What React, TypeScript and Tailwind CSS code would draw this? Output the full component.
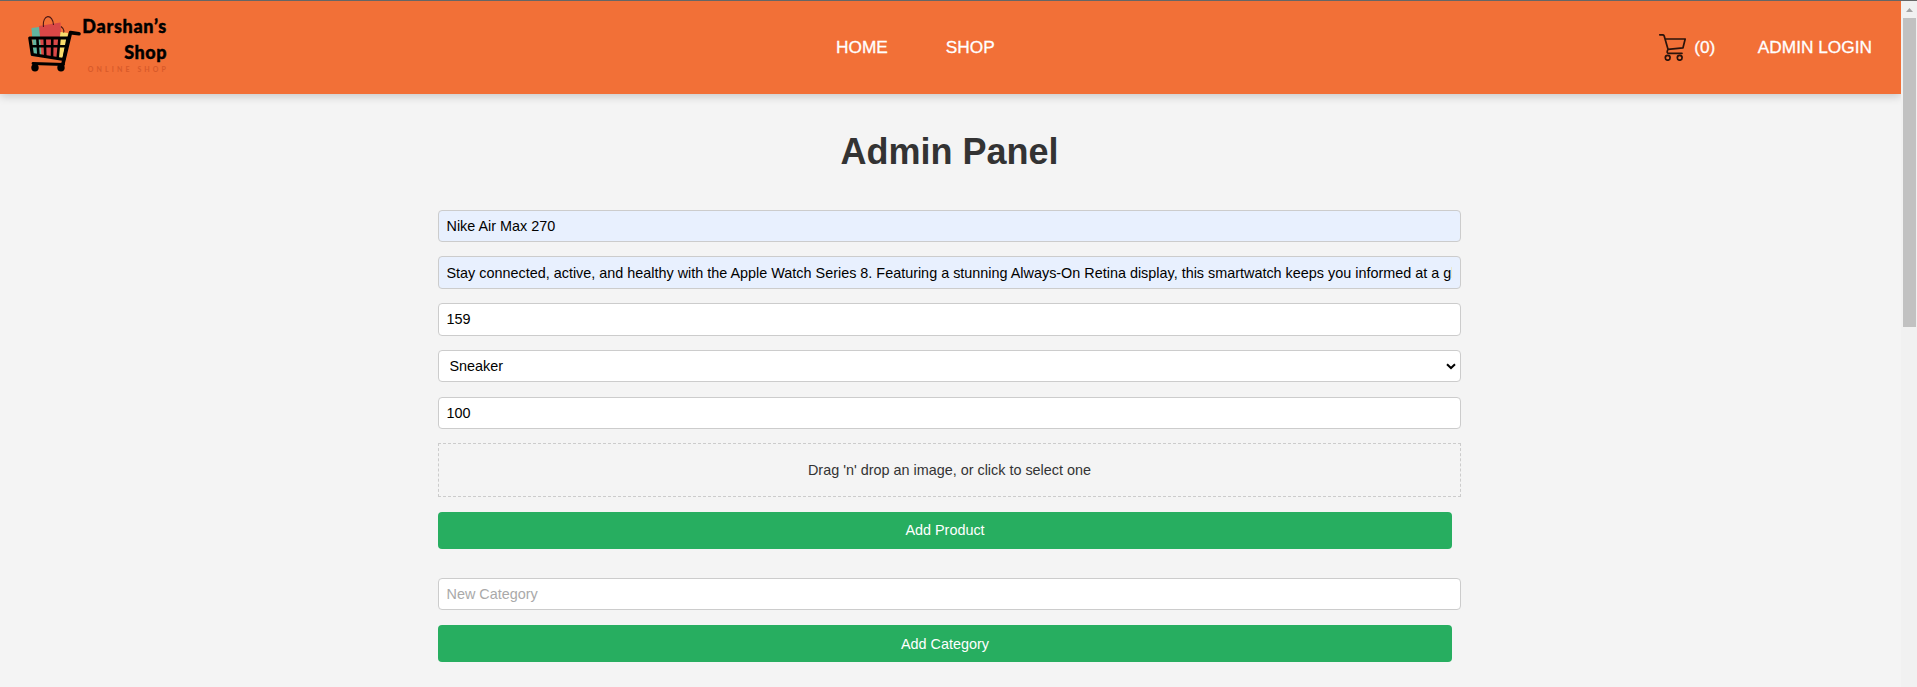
import type { ReactNode } from "react";

const fieldClass =
  "block w-full rounded-[4px] border border-[#ccc] pr-[8.5px] text-[14.4px] text-black placeholder:text-[#a9a9a9] outline-none";

function Logo() {
  return (
    <div className="flex h-[70px] items-start pl-[28px]">
      <svg width="54" height="56" viewBox="0 0 54 56" className="mt-[3px] shrink-0">
        <path d="M3.500 12l8-1 2 30-8-1z" fill="#61b5a0" />
        <path d="M11 10L32.500 6.500l1.500 35-20-1z" fill="#d94747" />
        <path d="M32.500 16l7.500 1-3 25-8 1z" fill="#f8dc6c" />
        <path d="M15.500 11C14-2.500 25-2.500 25.500 9M33 10.500q4 3 2.500 6" fill="none" stroke="#4b1714" strokeWidth="1.100" />
        <path d="M1.800 22H40L35.800 43.500 4.300 38.500z" fill="none" stroke="#000" strokeWidth="3.200" strokeLinejoin="round" />
        <path d="M3 30.200H38M9.300 22l1.200 18M16.700 22l.6 19M24.300 22l-.3 20M31.500 22l-1.800 20" stroke="#000" strokeWidth="2.600" />
        <path d="M51 17.800l-8.500-1.200-7.500 31" fill="none" stroke="#000" strokeWidth="3.600" strokeLinecap="round" strokeLinejoin="round" />
        <path d="M5 47.500l30.500 1" fill="none" stroke="#000" strokeWidth="2.800" strokeLinecap="round" />
        <circle cx="7" cy="51.800" r="3.700" />
        <circle cx="33" cy="51.800" r="3.700" />
      </svg>
      <div className="flex w-[85px] flex-col items-end font-[Lato,sans-serif] text-[18px] font-black text-black [-webkit-text-stroke:0.4px_black]">
        <span className="leading-[26px] whitespace-nowrap tracking-[0.7px]">Darshan’s</span>
        <span className="leading-[26px] tracking-[0.5px]">Shop</span>
        <span className="mr-[-2px] text-[7px] leading-[9px] font-bold whitespace-nowrap text-[#d85a2a] tracking-[3.100px] [-webkit-text-stroke:0]">
          ONLINE SHOP
        </span>
      </div>
    </div>
  );
}

function CartIcon() {
  return (
    <svg width="27" height="27" viewBox="0 0 27 27" fill="none" stroke="#2a130b" strokeWidth="1.700" strokeLinecap="round" strokeLinejoin="round">
      <path d="M.8.8h2.700q1.300 0 1.700 1.200L9 15.300l15-1.500L26.200 5H6M9 15.300q-2 4 .8 4H23" />
      <circle cx="8.700" cy="23.800" r="2.400" />
      <circle cx="20.700" cy="23.800" r="2.400" />
    </svg>
  );
}

function Header() {
  return (
    <header className="flex h-[93px] items-center bg-[#f27037] text-[17.28px] text-white shadow-[0_2px_9px_rgba(0,0,0,0.2)] [-webkit-text-stroke:0.3px_white]">
      <div className="w-[836px]">
        <Logo />
      </div>
      <nav className="flex gap-[58px]">
        <a>HOME</a>
        <a>SHOP</a>
      </nav>
      <div className="flex flex-1 items-center justify-end pr-[29px]">
        <CartIcon />
        <span className="ml-[8px]">(0)</span>
        <a className="ml-[42.5px]">ADMIN LOGIN</a>
      </div>
    </header>
  );
}

function GreenButton({ children }: { children: ReactNode }) {
  return (
    <button className="block h-[37px] w-[1014px] rounded-[4px] bg-[#27ae60] text-[14.4px] text-white">
      {children}
    </button>
  );
}

function ProductForm() {
  return (
    <div className="flex flex-col">
      <input className={`${fieldClass} h-8 bg-[#e8f0fe] pl-[7.5px]`} defaultValue="Nike Air Max 270" />
      <input
        className={`${fieldClass} mt-[14px] h-[33px] bg-[#e8f0fe] pl-[7.5px]`}
        defaultValue="Stay connected, active, and healthy with the Apple Watch Series 8. Featuring a stunning Always-On Retina display, this smartwatch keeps you informed at a glance."
      />
      <input className={`${fieldClass} mt-[14px] h-[33px] bg-white pb-px pl-[7.5px]`} defaultValue="159" />
      <div className="relative mt-[14px]">
        <select className={`${fieldClass} h-8 appearance-none bg-white pt-px pl-[10.5px]`} defaultValue="Sneaker">
          <option>Sneaker</option>
        </select>
        <svg className="absolute top-[13px] right-[5px]" width="10" height="7" viewBox="0 0 10 7" fill="none" stroke="#000" strokeWidth="2">
          <path d="M1 1.200l4 3.800 4-3.800" />
        </svg>
      </div>
      <input className={`${fieldClass} mt-[15px] h-8 bg-white pl-[7.5px]`} defaultValue="100" />
      <div className="mt-[14px] flex h-[54px] items-center justify-center border border-dashed border-[#ccc] pt-[2px] text-[14.4px] text-[#333]">
        Drag 'n' drop an image, or click to select one
      </div>
      <div className="mt-[15px]">
        <GreenButton>Add Product</GreenButton>
      </div>
    </div>
  );
}

function Scrollbar() {
  return (
    <div className="flex w-4 shrink-0 flex-col items-center bg-[#f1f1f1]">
      <div className="flex h-[17px] items-center justify-center">
        <svg width="7" height="4" viewBox="0 0 7 4">
          <path d="M0 4L3.500 0 7 4z" fill="#a3a3a3" />
        </svg>
      </div>
      <div className="h-[309px] w-[13px] bg-[#c1c1c1]" />
    </div>
  );
}

export default function App() {
  return (
    <div className="flex h-[687px] overflow-hidden border-t border-[#666] bg-[#f4f4f4] font-['Liberation_Sans',Arial,sans-serif]">
      <div className="min-w-0 flex-1 overflow-hidden">
        <Header />
        <main className="ml-[438px] w-[1023px] pt-[37px]">
          <h1 className="mb-[38px] text-center text-[36px] leading-[41px] font-bold text-[#333]">Admin Panel</h1>
          <ProductForm />
          <div className="mt-[29px]">
            <input className={`${fieldClass} h-8 bg-white pl-[7.5px]`} placeholder="New Category" />
            <div className="mt-[15px]">
              <GreenButton>
                <span className="block pt-[2px]">Add Category</span>
              </GreenButton>
            </div>
          </div>
        </main>
      </div>
      <Scrollbar />
    </div>
  );
}
